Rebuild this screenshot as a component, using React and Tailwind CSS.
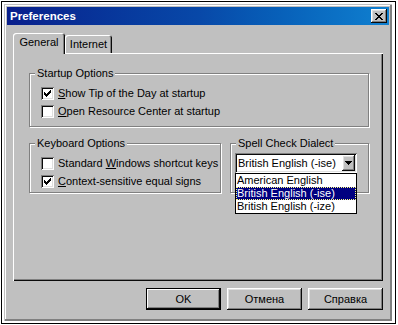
import React, { useState } from "react";

const raised =
  "shadow-[inset_-1px_-1px_#0a0a0a,inset_1px_1px_#fff,inset_-2px_-2px_#808080,inset_2px_2px_#dfdfdf]";
const sunken =
  "shadow-[inset_1px_1px_#808080,inset_-1px_-1px_#fff,inset_2px_2px_#0a0a0a,inset_-2px_-2px_#dfdfdf]";

// pixel check mark, 7x7
const CHECK = [
  [6, 0], [5, 1], [6, 1], [0, 2], [4, 2], [5, 2], [6, 2],
  [0, 3], [1, 3], [3, 3], [4, 3], [5, 3],
  [0, 4], [1, 4], [2, 4], [3, 4], [4, 4],
  [1, 5], [2, 5], [3, 5], [2, 6]
];

// pixel close glyph, 8x7
const CROSS = [
  [0, 0], [1, 0], [6, 0], [7, 0],
  [1, 1], [2, 1], [5, 1], [6, 1],
  [2, 2], [3, 2], [4, 2], [5, 2],
  [3, 3], [4, 3],
  [2, 4], [3, 4], [4, 4], [5, 4],
  [1, 5], [2, 5], [5, 5], [6, 5],
  [0, 6], [1, 6], [6, 6], [7, 6]
];

const Pixels = ({ dots, w, h }) => (
  <svg width={w} height={h} viewBox={`0 0 ${w} ${h}`} shapeRendering="crispEdges">
    {dots.map(([x, y]) => (
      <rect key={`${x}-${y}`} x={x} y={y} width="1" height="1" fill="#000" />
    ))}
  </svg>
);

const GroupBox = ({ label, className = "", children }) => (
  <div
    className={`relative border border-[#808080] shadow-[1px_1px_0_#fff,inset_1px_1px_0_#fff] ${className}`}
  >
    <span className="absolute -top-[7px] left-[5px] bg-[#c0c0c0] px-[2px] leading-[13px] whitespace-nowrap">
      {label}
    </span>
    {children}
  </div>
);

const CheckRow = ({ checked, onToggle, children }) => (
  <div className="flex h-[13px] items-center gap-[4px] whitespace-nowrap" onClick={onToggle}>
    <div className={`flex h-[13px] w-[13px] shrink-0 items-center justify-center bg-white ${sunken}`}>
      {checked && <Pixels dots={CHECK} w={7} h={7} />}
    </div>
    <span className="leading-[13px]">{children}</span>
  </div>
);

const DIALECTS = ["American English", "British English (-ise)", "British English (-ize)"];

export default function App() {
  const [tab, setTab] = useState("general");
  const [opts, setOpts] = useState({
    tip: true,
    resource: false,
    winKeys: false,
    equal: true
  });
  const [dialect] = useState(1);

  const toggle = (key) => setOpts((prev) => ({ ...prev, [key]: !prev[key] }));

  return (
    <div className="h-[325px] w-[398px] bg-white pl-px pt-px font-['Liberation_Sans',Arial,sans-serif] text-[11px] text-black">
      <div className="h-[323px] w-[395px] border border-black bg-white pb-[2px] pl-[2px] pr-[3px] pt-[2px]">
        {/* window */}
        <div className="flex h-full w-full flex-col bg-[#c0c0c0] p-[3px] shadow-[inset_1px_1px_#c0c0c0,inset_-2px_-2px_#808080,inset_2px_2px_#fff]">
          {/* title bar */}
          <div className="flex h-[18px] shrink-0 items-center justify-between bg-linear-to-r from-[#0a1f8c] via-[#0848a8] to-[#1080d0] pl-[3px] pr-[2px]">
            <span className="text-[11.5px] font-bold leading-[14px] text-white">Preferences</span>
            <button className={`flex h-[14px] w-[16px] items-center justify-center bg-[#c0c0c0] ${raised}`}>
              <Pixels dots={CROSS} w={8} h={7} />
            </button>
          </div>

          {/* tabs */}
          <div className="ml-[6px] mt-[8px] flex h-[20px] items-end">
            <button
              onClick={() => setTab("general")}
              className={`relative z-10 flex justify-center bg-[#c0c0c0] pt-[3px] leading-[13px] shadow-[inset_1px_1px_#fff,inset_-1px_0_#0a0a0a,inset_-2px_0_#808080] rounded-t-[3px] ${
                tab === "general" ? "-mb-px h-[21px] w-[52px]" : "h-[18px] w-[48px]"
              }`}
            >
              General
            </button>
            <button
              onClick={() => setTab("internet")}
              className="flex h-[18px] w-[47px] justify-center rounded-t-[3px] bg-[#c0c0c0] pt-[3px] leading-[13px] shadow-[inset_1px_1px_#fff,inset_-1px_0_#0a0a0a,inset_-2px_0_#808080]"
            >
              Internet
            </button>
          </div>

          {/* tab panel */}
          <div className="ml-[6px] h-[228px] w-[370px] bg-[#c0c0c0] pl-[16px] pt-[20px] shadow-[inset_1px_1px_#fff,inset_-1px_-1px_#0a0a0a,inset_-2px_-2px_#808080]">
            <GroupBox label="Startup Options" className="h-[54px] w-[340px] pl-[11px] pt-[13px]">
              <div className="flex flex-col gap-[5px]">
                <CheckRow checked={opts.tip} onToggle={() => toggle("tip")}>
                  <u>S</u>how Tip of the Day at startup
                </CheckRow>
                <CheckRow checked={opts.resource} onToggle={() => toggle("resource")}>
                  <u>O</u>pen Resource Center at startup
                </CheckRow>
              </div>
            </GroupBox>

            <div className="mt-[16px] flex">
              <GroupBox label="Keyboard Options" className="h-[50px] w-[192px] pl-[11px] pt-[13px]">
                <div className="flex flex-col gap-[5px]">
                  <CheckRow checked={opts.winKeys} onToggle={() => toggle("winKeys")}>
                    Standard <u>W</u>indows shortcut keys
                  </CheckRow>
                  <CheckRow checked={opts.equal} onToggle={() => toggle("equal")}>
                    <u>C</u>ontext-sensitive equal signs
                  </CheckRow>
                </div>
              </GroupBox>

              <GroupBox label="Spell Check Dialect" className="ml-[9px] h-[50px] w-[139px] pl-[4px] pt-[9px]">
                <div className={`relative flex h-[20px] w-[122px] bg-white p-[2px] ${sunken}`}>
                  <span className="flex-1 pl-[1px] leading-[16px] whitespace-nowrap">{DIALECTS[dialect]}</span>
                  <div className={`flex h-[16px] w-[13px] items-center justify-center bg-[#c0c0c0] ${raised}`}>
                    <svg width="7" height="4" viewBox="0 0 7 4" shapeRendering="crispEdges">
                      <path d="M0 0h7v1H0zM1 1h5v1H1zM2 2h3v1H2zM3 3h1v1H3z" fill="#000" />
                    </svg>
                  </div>

                  {/* open list */}
                  <div className="absolute left-0 top-full z-20 w-[122px] border border-black bg-white">
                    {DIALECTS.map((d, i) => (
                      <div
                        key={d}
                        className={`h-[13px] pl-[1px] leading-[13px] whitespace-nowrap ${
                          i === dialect
                            ? "bg-[#000080] text-white outline-1 -outline-offset-1 outline-dotted outline-[#ffff80]"
                            : ""
                        }`}
                      >
                        {d}
                      </div>
                    ))}
                  </div>
                </div>
              </GroupBox>
            </div>
          </div>

          {/* buttons */}
          <div className="mr-[6px] mt-[7px] flex justify-end gap-[6px]">
            <button className="h-[22px] w-[75px] border border-black bg-[#c0c0c0] shadow-[inset_-1px_-1px_#0a0a0a,inset_1px_1px_#fff,inset_-2px_-2px_#808080]">
              OK
            </button>
            <button className={`h-[22px] w-[75px] bg-[#c0c0c0] ${raised}`}>Отмена</button>
            <button className={`h-[22px] w-[75px] bg-[#c0c0c0] ${raised}`}>Справка</button>
          </div>
        </div>
      </div>
    </div>
  );
}
